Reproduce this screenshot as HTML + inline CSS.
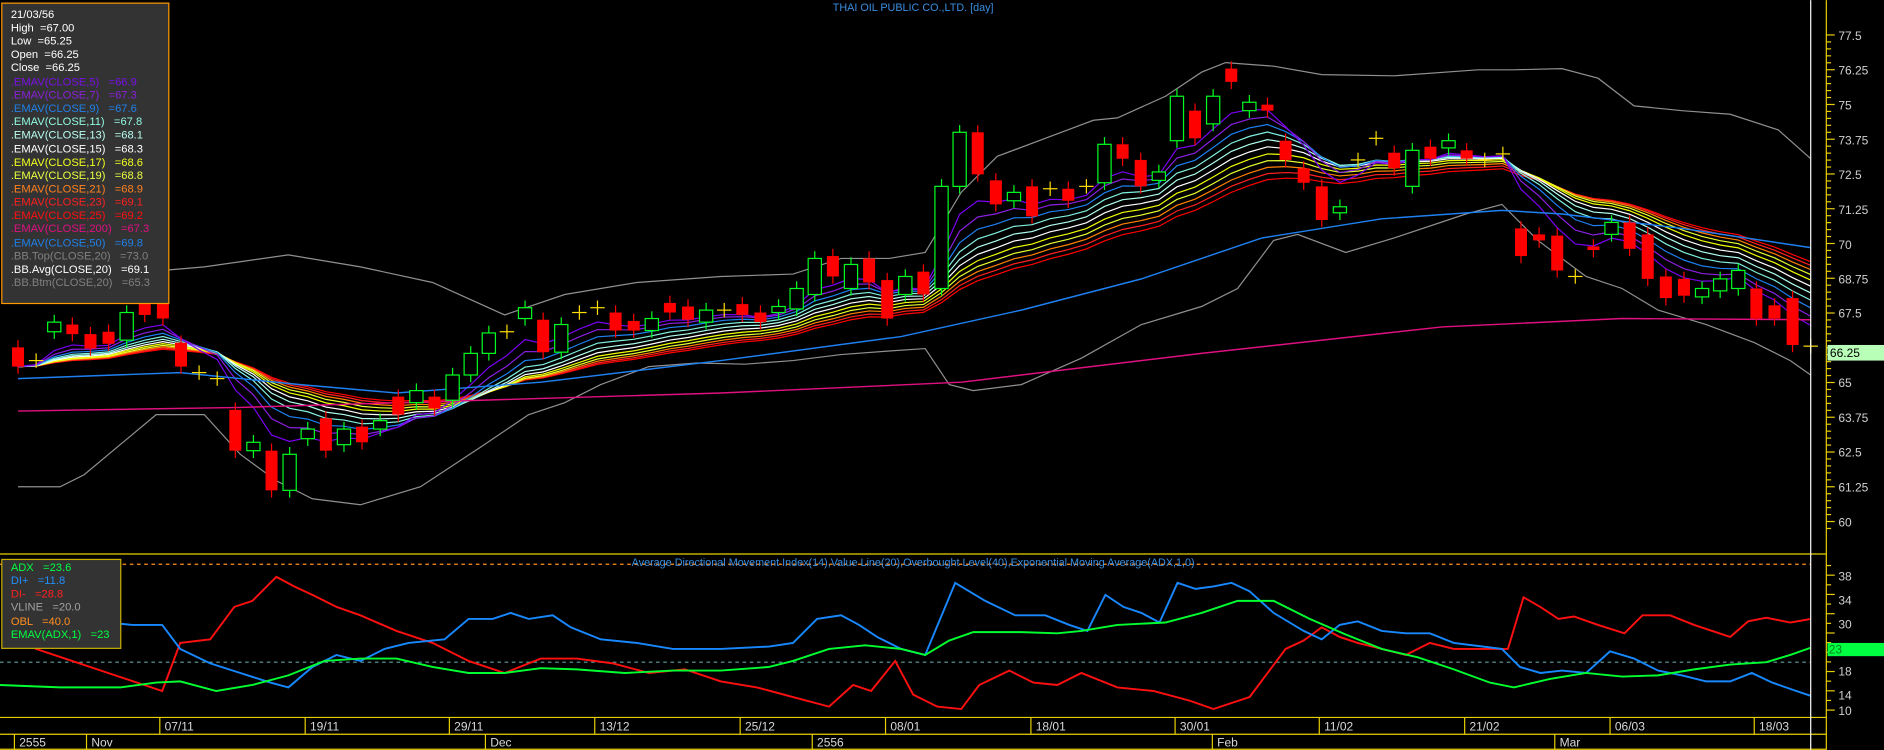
<!DOCTYPE html>
<html><head><meta charset="utf-8"><style>
html,body{margin:0;padding:0;background:#000;width:1884px;height:750px;overflow:hidden}
svg{display:block}
text{font-family:"Liberation Sans",sans-serif;white-space:pre}
</style></head><body>
<svg id="s" width="1884" height="750" viewBox="0 0 1568 624" xmlns="http://www.w3.org/2000/svg">
<rect width="1568" height="624" fill="#000"/>
<g id="bb"></g>
<g id="ema"></g>
<g id="candles"></g>
<g id="adx"></g>
<line x1="0" y1="461" x2="1520" y2="461" stroke="#e8d000" stroke-width="1"/>
<line x1="1520" y1="0" x2="1520" y2="624" stroke="#e8d000" stroke-width="1"/>
<line x1="0" y1="597" x2="1520" y2="597" stroke="#e8d000"/>
<line x1="0" y1="611" x2="1520" y2="611" stroke="#e8d000"/>
<line x1="0" y1="623.5" x2="1520" y2="623.5" stroke="#e8d000"/>
<g stroke="#e8d000">
<line x1="133" y1="597" x2="133" y2="611"/><line x1="254" y1="597" x2="254" y2="611"/><line x1="374" y1="597" x2="374" y2="611"/><line x1="495" y1="597" x2="495" y2="611"/><line x1="616" y1="597" x2="616" y2="611"/><line x1="737" y1="597" x2="737" y2="611"/><line x1="858" y1="597" x2="858" y2="611"/><line x1="978" y1="597" x2="978" y2="611"/><line x1="1098" y1="597" x2="1098" y2="611"/><line x1="1219" y1="597" x2="1219" y2="611"/><line x1="1340" y1="597" x2="1340" y2="611"/><line x1="1460" y1="597" x2="1460" y2="611"/>
<line x1="12" y1="611" x2="12" y2="624"/><line x1="72" y1="611" x2="72" y2="624"/><line x1="404" y1="611" x2="404" y2="624"/><line x1="676" y1="611" x2="676" y2="624"/><line x1="1009" y1="611" x2="1009" y2="624"/><line x1="1294" y1="611" x2="1294" y2="624"/>
</g>
<line x1="1507" y1="0" x2="1507" y2="624" stroke="#fff" stroke-width="1"/>
<g font-size="10" fill="#d8d8d8">
<text x="137" y="608">07/11</text><text x="258" y="608">19/11</text><text x="378" y="608">29/11</text><text x="499" y="608">13/12</text><text x="620" y="608">25/12</text><text x="741" y="608">08/01</text><text x="862" y="608">18/01</text><text x="982" y="608">30/01</text><text x="1102" y="608">11/02</text><text x="1223" y="608">21/02</text><text x="1344" y="608">06/03</text><text x="1464" y="608">18/03</text>
<text x="16" y="621">2555</text><text x="76" y="621">Nov</text><text x="408" y="621">Dec</text><text x="680" y="621">2556</text><text x="1013" y="621">Feb</text><text x="1298" y="621">Mar</text>
</g>
<text x="760" y="9" font-size="9" fill="#3a8ee0" text-anchor="middle">THAI OIL PUBLIC CO.,LTD. [day]</text>
<text x="760" y="471" font-size="9" fill="#3a8ee0" text-anchor="middle">Average Directional Movement Index(14),Value Line(20),Overbought Level(40),Exponential Moving Average(ADX,1,0)</text>
<g id="ticks" stroke="#e8d000"></g>
<g font-size="10" fill="#d0d0d0">
<text x="1530" y="33">77.5</text><text x="1530" y="62">76.25</text><text x="1530" y="91">75</text><text x="1530" y="120">73.75</text><text x="1530" y="149">72.5</text><text x="1530" y="178">71.25</text><text x="1530" y="207">70</text><text x="1530" y="236">68.75</text><text x="1530" y="264">67.5</text><text x="1530" y="322">65</text><text x="1530" y="351">63.75</text><text x="1530" y="380">62.5</text><text x="1530" y="409">61.25</text><text x="1530" y="438">60</text>
<text x="1530" y="483">38</text><text x="1530" y="503">34</text><text x="1530" y="523">30</text><text x="1530" y="543">26</text><text x="1530" y="562">18</text><text x="1530" y="582">14</text><text x="1530" y="595">10</text>
</g>
<rect x="1521" y="287" width="47" height="13" fill="#b8ffb8"/>
<text x="1523" y="297" font-size="10" fill="#000">66.25</text>
<rect x="1521" y="535" width="47" height="11" fill="#00ff40"/>
<text x="1522" y="544" font-size="10" fill="#008020">23</text>
<rect x="1.5" y="2.5" width="139" height="250" fill="#333" stroke="#ff9a00"/>
<g font-size="9.3">
<text x="9" y="15" fill="#fff">21/03/56</text>
<text x="9" y="26" fill="#fff">High  =67.00</text>
<text x="9" y="37" fill="#fff">Low  =65.25</text>
<text x="9" y="48" fill="#fff">Open  =66.25</text>
<text x="9" y="59" fill="#fff">Close  =66.25</text>
<text x="9" y="71" fill="#7a10e8">.EMAV(CLOSE,5)   =66.9</text>
<text x="9" y="82" fill="#8a20d8">.EMAV(CLOSE,7)   =67.3</text>
<text x="9" y="93" fill="#2080e8">.EMAV(CLOSE,9)   =67.6</text>
<text x="9" y="104" fill="#90f8e0">.EMAV(CLOSE,11)   =67.8</text>
<text x="9" y="115" fill="#b8fff0">.EMAV(CLOSE,13)   =68.1</text>
<text x="9" y="127" fill="#fff">.EMAV(CLOSE,15)   =68.3</text>
<text x="9" y="138" fill="#f0ff20">.EMAV(CLOSE,17)   =68.6</text>
<text x="9" y="149" fill="#e8ff40">.EMAV(CLOSE,19)   =68.8</text>
<text x="9" y="160" fill="#ff8020">.EMAV(CLOSE,21)   =68.9</text>
<text x="9" y="171" fill="#ff2020">.EMAV(CLOSE,23)   =69.1</text>
<text x="9" y="182" fill="#ff1010">.EMAV(CLOSE,25)   =69.2</text>
<text x="9" y="193" fill="#e01080">.EMAV(CLOSE,200)   =67.3</text>
<text x="9" y="205" fill="#2080e8">.EMAV(CLOSE,50)   =69.8</text>
<text x="9" y="216" fill="#808080">.BB.Top(CLOSE,20)   =73.0</text>
<text x="9" y="227" fill="#fff">.BB.Avg(CLOSE,20)   =69.1</text>
<text x="9" y="238" fill="#808080">.BB.Btm(CLOSE,20)   =65.3</text>
</g>
<rect x="1.5" y="465.5" width="99" height="74" fill="#333" stroke="#c8b000"/>
<g font-size="9.3">
<text x="9" y="475" fill="#00ff40">ADX   =23.6</text>
<text x="9" y="486" fill="#2090ff">DI+   =11.8</text>
<text x="9" y="497" fill="#ff2020">DI-   =28.8</text>
<text x="9" y="508" fill="#a0a0a0">VLINE   =20.0</text>
<text x="9" y="520" fill="#ff9020">OBL   =40.0</text>
<text x="9" y="531" fill="#00ff40">EMAV(ADX,1)   =23</text>
</g>
<script>
var NS="http://www.w3.org/2000/svg";
function el(p,t,a){var e=document.createElementNS(NS,t);for(var k in a)e.setAttribute(k,a[k]);p.appendChild(e);return e;}
function pl(p,pts,c,w,extra){var s=pts.map(function(q){return q[0]+","+q[1]}).join(" ");var a={points:s,fill:"none",stroke:c,"stroke-width":w||1};for(var k in extra)a[k]=extra[k];return el(p,"polyline",a);}
var tk=document.getElementById("ticks");
for(var y=29;y<=440;y+=5.785){el(tk,"line",{x1:1520,x2:(Math.round((y-29)/5.785)%5==0?1527:1524),y1:y,y2:y});}
for(var v=10;v<=40;v+=2){var yy=478.6+(38-v)*4.01;el(tk,"line",{x1:1520,x2:(v%4==2?1527:1524),y1:yy,y2:yy});}
var C=[['r',289,305],['x',300,300],['g',268,276],['r',270,278],['r',278,290],['r',276,286],['g',260,283],['r',252,262],['r',245,265],['r',285,305],['x',310,310],['x',315,315],['r',341,375],['g',368,375],['r',375,408],['g',378,408],['g',357,365],['r',348,375],['g',357,370],['r',355,368],['g',350,357],['r',330,345],['g',325,335],['r',330,340],['g',312,333],['g',294,312],['g',277,294],['x',276,276],['g',256,265],['r',266,293],['g',270,293],['x',260,260],['x',256,256],['r',260,275],['r',267,275],['g',265,275],['r',252,260],['r',255,266],['g',258,268],['x',258,258],['r',253,262],['r',260,268],['g',255,260],['g',240,257],['g',215,245],['r',213,230],['g',220,240],['r',215,235],['r',233,265],['g',230,245],['r',226,245],['g',155,240],['g',110,155],['r',110,145],['r',150,170],['g',160,167],['r',155,180],['x',157,157],['r',157,167],['x',155,155],['g',120,152],['r',120,132],['r',133,155],['g',143,150],['g',80,117],['r',92,115],['g',80,103],['r',57,68],['g',85,92],['r',87,92],['r',117,133],['r',140,152],['r',155,183],['g',172,177],['x',133,133],['x',115,115],['r',127,140],['g',125,155],['r',122,132],['g',117,123],['r',125,132],['x',133,133],['x',128,128],['r',190,213],['r',195,200],['r',196,225],['x',230,230],['r',205,208],['g',185,195],['r',185,207],['r',195,232],['r',230,248],['r',232,246],['g',240,247],['g',232,242],['g',225,240],['r',240,265],['r',254,265],['r',248,287],['x',288,288]];
var N=C.length,dx=(1507-15)/(N-1);
var cg=document.getElementById("candles");
var closes=[];
C.forEach(function(c,i){var x=15+i*dx;var t=c[1],b=c[2];
 var col=c[0]=='r'?'#ff0000':(c[0]=='g'?'#00ff20':'#ffe000');
 el(cg,"line",{x1:x,x2:x,y1:t-6,y2:b+6,stroke:col,"stroke-width":1});
 if(c[0]=='r'){el(cg,"rect",{x:x-5,y:t,width:10,height:Math.max(2,b-t),fill:col});closes.push(b);}
 else if(c[0]=='g'){el(cg,"rect",{x:x-5.5,y:t,width:11,height:Math.max(2,b-t),fill:"#000",stroke:col,"stroke-width":1});closes.push(t);}
 else{el(cg,"line",{x1:x-6,x2:x+6,y1:t,y2:t,stroke:col});closes.push(t);}
});
var eg=document.getElementById("ema");
var per=[25,23,21,19,17,15,13,11,9,7,5],cols=['#ff0000','#ff2020','#ff8000','#e8ff30','#f0ff00','#ffffff','#b0fff0','#80f0e0','#1e80f0','#8a20e0','#7a00f0'];
per.forEach(function(p,k){var a=2/(p+1),e=closes[0],pts=[];closes.forEach(function(c,i){e=i?e+a*(c-e):c;pts.push([15+i*dx,e.toFixed(1)]);});pl(eg,pts,cols[k],1);});
pl(eg,[[15,315],[150,310],[250,320],[330,327],[450,318],[600,300],[750,280],[850,258],[950,232],[1050,198],[1150,182],[1250,175],[1300,178],[1400,190],[1507,206]],'#1e80f0',1.2);
pl(eg,[[15,342],[200,339],[400,333],[600,327],[800,318],[1000,294],[1200,272],[1350,265],[1507,266]],'#e01080',1.2);
var bg=document.getElementById("bb");
pl(bg,[[15,225],[100,228],[170,222],[240,212],[300,222],[360,235],[420,262],[470,245],[530,235],[600,230],[660,228],[700,215],[740,215],[770,210],[800,160],[830,130],[870,115],[910,100],[930,98],[970,80],[1000,60],[1020,52],[1060,55],[1100,62],[1160,63],[1230,58],[1260,58],[1300,57],[1330,65],[1360,88],[1400,92],[1440,95],[1480,108],[1507,132]],'#909090',1);
pl(bg,[[15,405],[50,405],[70,395],[100,370],[130,345],[170,345],[200,378],[230,400],[260,415],[300,420],[350,405],[400,372],[440,345],[470,335],[500,320],[540,305],[580,302],[620,303],[660,300],[700,295],[740,292],[770,290],[790,320],[810,325],[850,320],[900,298],[950,270],[1000,255],[1030,240],[1060,200],[1080,195],[1120,210],[1160,198],[1220,178],[1250,170],[1280,200],[1320,230],[1350,240],[1380,258],[1420,270],[1460,285],[1490,300],[1507,312]],'#909090',1);
var ag=document.getElementById("adx");
el(ag,"line",{x1:0,x2:1507,y1:469.5,y2:469.5,stroke:"#ff9020","stroke-dasharray":"3,3"});
el(ag,"line",{x1:0,x2:1507,y1:551,y2:551,stroke:"#60a0a0","stroke-dasharray":"3,3"});
pl(ag,[[15,528],[30,540],[60,550],[90,560],[120,570],[135,575],[150,535],[175,532],[195,505],[210,500],[230,480],[245,488],[260,495],[280,505],[300,512],[330,525],[360,535],[390,550],[420,560],[450,548],[480,548],[510,552],[540,560],[570,557],[600,567],[630,572],[660,580],[690,588],[710,570],[725,575],[745,550],[760,578],[780,588],[800,590],[815,570],[840,558],[860,568],[880,570],[900,560],[930,572],[960,575],[990,583],[1010,590],[1025,585],[1040,580],[1055,560],[1070,540],[1085,533],[1100,522],[1115,530],[1130,535],[1150,540],[1170,545],[1190,535],[1210,540],[1240,540],[1255,540],[1268,497],[1282,505],[1297,515],[1310,513],[1330,520],[1352,527],[1367,512],[1390,512],[1410,520],[1440,530],[1455,517],[1470,514],[1490,518],[1507,515]],'#ff1010',1.6);
pl(ag,[[15,525],[40,520],[80,517],[110,520],[135,520],[150,540],[175,552],[200,560],[225,568],[240,572],[260,555],[280,545],[300,550],[320,540],[340,535],[370,532],[390,515],[410,515],[425,510],[440,515],[460,512],[475,522],[500,532],[530,535],[560,540],[600,540],[640,538],[660,535],[680,515],[700,512],[715,520],[730,530],[750,540],[770,545],[795,485],[820,500],[845,512],[870,512],[890,520],[905,525],[920,495],[935,505],[950,510],[965,518],[980,485],[995,490],[1010,488],[1025,485],[1040,492],[1060,510],[1085,525],[1100,532],[1115,520],[1130,517],[1150,525],[1170,527],[1190,527],[1210,535],[1250,540],[1265,555],[1282,560],[1300,558],[1320,560],[1340,542],[1360,548],[1380,558],[1400,562],[1420,567],[1440,567],[1458,560],[1475,568],[1495,575],[1507,579]],'#1888ff',1.6);
pl(ag,[[0,570],[50,572],[100,572],[130,568],[150,567],[180,575],[210,570],[240,562],[270,550],[300,548],[330,548],[360,555],[390,560],[420,560],[450,556],[480,557],[520,560],[560,558],[600,558],[640,555],[660,550],[690,540],[720,537],[750,540],[770,545],[790,533],[810,526],[850,526],[880,527],[900,525],[930,520],[970,518],[1000,510],[1030,500],[1060,500],[1090,515],[1120,528],[1150,540],[1180,547],[1210,557],[1240,568],[1260,572],[1290,565],[1320,560],[1350,563],[1380,562],[1410,557],[1440,553],[1470,551],[1490,545],[1507,539]],'#00ff30',1.6);
</script>
</svg>
</body></html>
